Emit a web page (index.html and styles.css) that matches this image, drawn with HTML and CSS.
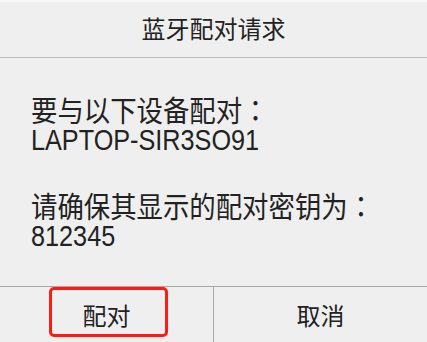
FILE: index.html
```html
<!DOCTYPE html>
<html lang="zh-CN">
<head>
<meta charset="utf-8">
<title>蓝牙配对请求</title>
<link rel="stylesheet" href="styles.css">
</head>
<body>
<div class="dialog">
  <div class="title">蓝牙配对请求</div>
  <div class="content">
    <p class="para">
      <span class="line cjk">要与以下设备配对<span class="colon" lang="ja">：</span></span>
      <span class="line latin">LAPTOP-SIR3SO91</span>
    </p>
    <p class="para">
      <span class="line cjk">请确保其显示的配对密钥为<span class="colon" lang="ja">：</span></span>
      <span class="line latin">812345</span>
    </p>
  </div>
  <div class="buttons">
    <div class="btn btn-pair">配对<span class="highlight"></span></div>
    <div class="btn">取消</div>
  </div>
</div>
</body>
</html>
```
FILE: styles.css
```css
html, body {
  margin: 0;
  padding: 0;
  background: #efefef;
}
.dialog {
  width: 427px;
  height: 342px;
  display: flex;
  flex-direction: column;
  background: #efefef;
  color: #222;
  font-family: "Liberation Sans", "Noto Sans CJK SC", sans-serif;
  border-top: 2px solid #f7f7f7;
  box-sizing: border-box;
}
.title {
  height: 57px;
  display: flex;
  align-items: center;
  justify-content: center;
  font-size: 24px;
  border-bottom: 1px solid #bcbcbc;
  font-family: "Noto Sans CJK SC", sans-serif;
  padding-bottom: 4px;
  box-sizing: border-box;
}
.content {
  flex: 1;
  padding: 36px 0 0 31px;
  line-height: 31px;
}
.para {
  margin: 0 0 34px 0;
}
.line {
  display: block;
  transform-origin: left center;
  white-space: nowrap;
}
.cjk {
  font-family: "Noto Sans CJK SC", sans-serif;
  font-size: 29px;
  transform: scaleX(0.91);
}
.colon {
  font-family: "Noto Sans CJK JP", sans-serif;
}
.latin {
  font-family: "Liberation Sans", sans-serif;
  font-size: 29px;
  transform: scaleX(0.87);
}
.buttons {
  height: 57px;
  display: flex;
  border-top: 1px solid #a8a8a8;
}
.btn {
  flex: 1;
  display: flex;
  align-items: center;
  justify-content: center;
  font-size: 24px;
  font-family: "Noto Sans CJK SC", sans-serif;
  position: relative;
}
.btn + .btn {
  border-left: 1px solid #a8a8a8;
}
.highlight {
  position: absolute;
  left: 49px;
  top: 0;
  width: 119px;
  height: 50px;
  border: 3.5px solid #ff1a14;
  border-radius: 5px;
  box-sizing: border-box;
}
```
